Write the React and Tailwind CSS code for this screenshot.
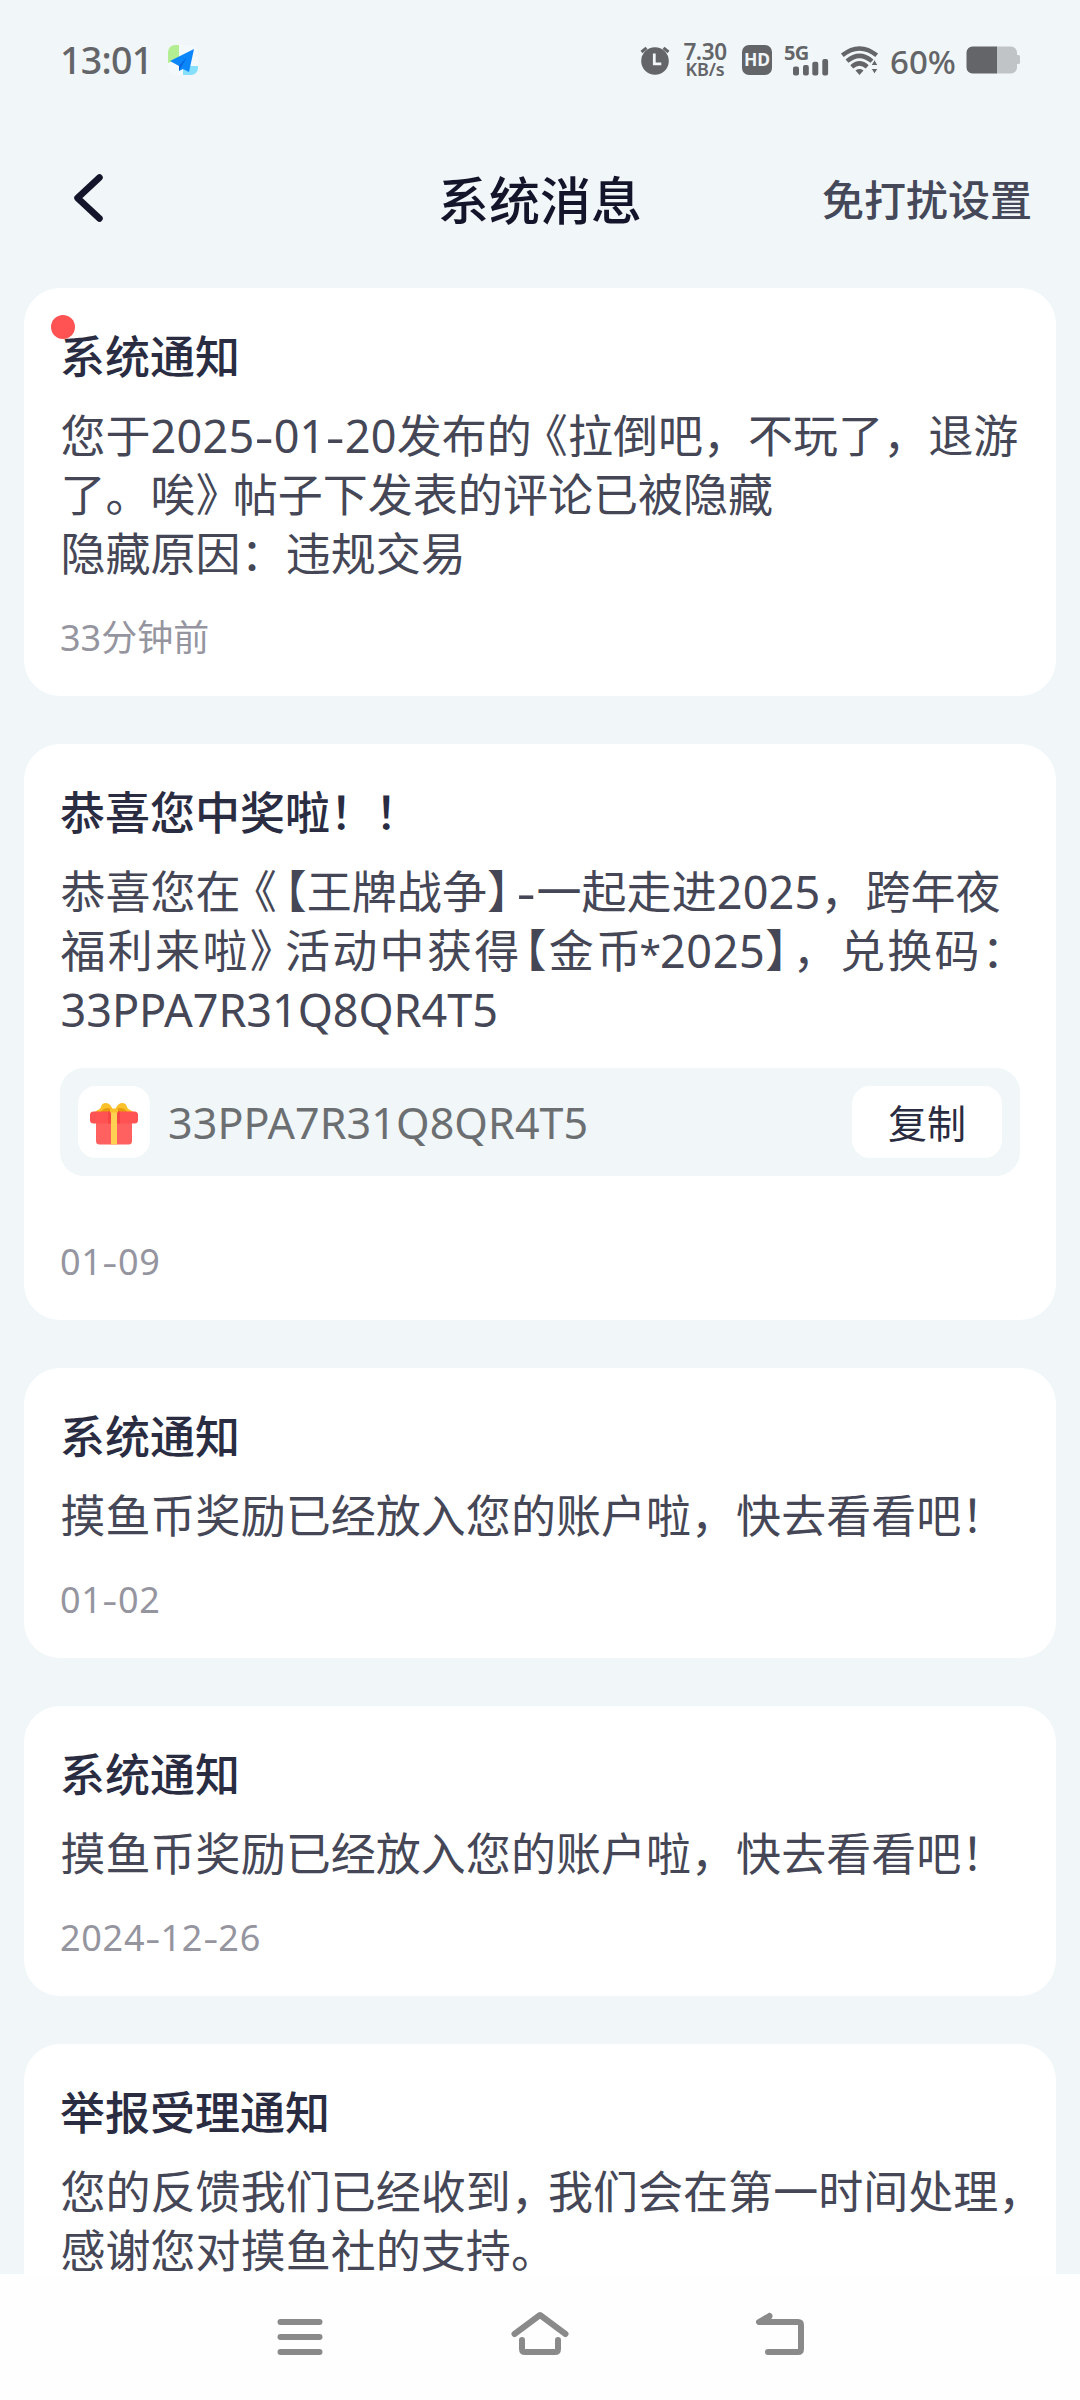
import React from "react";

const Hyphen = ({ className }) => <span className={`inline-block scale-x-130 ${className}`}>-</span>;

// Digit groups joined by widened hyphens.
const Num = ({ children }) => (
  <span className="tracking-[0.2px]">
    {children.split("-").map((part, i) => (
      <React.Fragment key={i}>
        {i > 0 && <Hyphen className="mx-[2.3px]" />}
        {part}
      </React.Fragment>
    ))}
  </span>
);

const Time = ({ children }) => (
  <span className="tracking-[0.7px]">
    {children.split("-").map((part, i) => (
      <React.Fragment key={i}>
        {i > 0 && <Hyphen className="mx-[1.5px]" />}
        {part}
      </React.Fragment>
    ))}
  </span>
);

const Line = ({ children, className = "" }) => (
  <div className={`h-[59px] whitespace-nowrap ${className}`}>{children}</div>
);

function StatusBar() {
  return (
    <header className="flex h-[120px] items-center pl-[60px] pr-[60px] text-[#636568]">
      <span className="w-[91px] text-[37.5px] leading-none font-medium tracking-[-0.7px] whitespace-nowrap">13:01</span>
      <svg className="ml-[16px] h-[32px] w-[32px]" viewBox="0 0 32 32">
        <rect x="1" y="1" width="30" height="30" rx="7" fill="#f4f9fc" />
        <path d="M1 19V8a7 7 0 0 1 7-7h4v14L1 19z" fill="#b4ee93" />
        <path d="M16 31V22h15v2a7 7 0 0 1-7 7z" fill="#86e0fc" />
        <path d="M3 17L27 5l-5 23-6-3-4 2v-5z" fill="#0c86fb" />
        <path d="M12 22L20 13l-6 10-2 4z" fill="#0062dc" />
      </svg>
      <div className="ml-auto flex items-center">
        <svg className="h-[32px] w-[32px]" viewBox="0 0 32 32">
          <circle cx="16" cy="17" r="13.8" fill="#636568" />
          <path d="M2.5 8l5-4.2M29.500 8l-5-4.2" stroke="#636568" strokeWidth="3" fill="none" />
          <path d="M15.300 9.500v10.300h7" stroke="#f1f6f9" strokeWidth="2.800" fill="none" />
        </svg>
        <div className="ml-[12px] flex w-[44px] flex-col items-center font-semibold">
          <span className="text-[22.5px] leading-[18px] tracking-[-0.4px]">7.30</span>
          <span className="text-[18px] leading-[17px] tracking-[-0.2px]">KB/s</span>
        </div>
        <div className="ml-[15px] flex h-[30px] w-[30px] items-center justify-center rounded-[7px] bg-[#636568] text-[17.5px] leading-none font-bold text-[#f1f6f9]">
          <span>HD</span>
        </div>
        <div className="ml-[12px] h-[32px] w-[46px]">
          <div className="h-[18px] text-[20px] leading-[18px] font-bold tracking-[-0.8px]">5G</div>
          <svg className="-mt-[4px] h-[18px] w-[46px]" viewBox="0 0 46 18">
            <g fill="#636568">
              <rect x="9" y="8.500" width="6" height="9" rx="2" />
              <rect x="19" y="7" width="5.800" height="10.500" rx="2" />
              <rect x="28.300" y="3.700" width="6" height="13.800" rx="2" />
              <rect x="38.300" y="1" width="5.800" height="16.500" rx="2" />
            </g>
          </svg>
        </div>
        <svg className="ml-[10px] h-[32px] w-[40px]" viewBox="0 0 40 32">
          <g fill="none" stroke="#636568" strokeWidth="4.400">
            <path d="M2.300 11.300Q19.500-2.500 36.700 11.300" />
            <path d="M7 17.200Q19.500 6.500 32 17.200" />
            <path d="M11.800 22.800Q19.500 16 27.200 22.800" />
          </g>
          <path d="M15.500 26.500q4-2.800 8 0L19.500 31z" fill="#636568" />
          <path d="M31 21.500l3.500-6 3.500 6zM31 24.500h7l-3.500 5.500z" fill="#636568" stroke="#f1f6f9" strokeWidth="1" />
        </svg>
        <span className="ml-[10px] w-[68px] pt-[2px] text-[33px] leading-none font-medium">60%</span>
        <svg className="ml-[8px] h-[28px] w-[54px]" viewBox="0 0 54 28">
          <path d="M30 0.500h15a6 6 0 0 1 6 6v2.500h1.500a1.500 1.500 0 0 1 1.500 1.500v6a1.500 1.500 0 0 1-1.500 1.500H51v3.500a6 6 0 0 1-6 6H30z" fill="#c1c4c7" />
          <path d="M6.500 0.500H31v27H6.500a6 6 0 0 1-6-6v-15a6 6 0 0 1 6-6z" fill="#636568" />
        </svg>
      </div>
    </header>
  );
}

function TitleBar() {
  return (
    <div className="grid h-[168px] grid-cols-[1fr_auto_1fr] items-start px-[48px] pt-[44px] pb-[52px]">
      <svg className="ml-[22px] mt-[8px] h-[54px] w-[40px]" viewBox="0 0 40 54" fill="none" stroke="#14152a" strokeWidth="6.500" strokeLinecap="round" strokeLinejoin="round">
        <path d="M29.500 5.500L7.500 26 29.500 46.500" />
      </svg>
      <h1 className="text-[51px] leading-[72px] font-medium text-[#14152a]">系统消息</h1>
      <span className="justify-self-end text-[42px] leading-[72px] font-medium text-[#444858]">免打扰设置</span>
    </div>
  );
}

function Gift() {
  return (
    <svg className="h-[48px] w-[48px]" viewBox="0 0 48 48">
      <path d="M4 15c2-3 6-3 7-6 1-6 9-5 11 1l2 5zM44 15c-2-3-6-3-7-6-1-6-9-5-11 1l-2 5z" fill="#fbc12b" />
      <path d="M10 15c3-5 8-6 12-4v4zM38 15c-3-5-8-6-12-4v4z" fill="#e79c0e" />
      <path d="M6 22h36v21a3.500 3.500 0 0 1-3.500 3.500h-29A3.500 3.500 0 0 1 6 43z" fill="#ff6161" />
      <rect x="0" y="13.500" width="48" height="12" rx="3.500" fill="#ff5353" />
      <path d="M18 13.500h12v12H18z" fill="#f54545" />
      <path d="M21 11h6v35.500h-6z" fill="#ffd152" />
      <path d="M20 10.500h8v4h-8z" fill="#fbc12b" />
    </svg>
  );
}

function Card({ title, time, unread, extra, children }) {
  return (
    <article className="relative rounded-[36px] bg-white px-[36px] pt-[37px] pb-[34px]">
      {unread && <i className="absolute top-[27px] left-[27px] h-[24px] w-[24px] rounded-full bg-[#ff5252]" />}
      <h2 className="h-[64px] text-[45px] leading-[64px] font-medium text-[#2a2c42]">{title}</h2>
      <div className="mt-[17px] pl-[0.5px] text-[45px] leading-[59px] tracking-[0.04px] text-[#454757]">{children}</div>
      {extra}
      {time && <div className={`${extra ? "mt-[62px]" : "mt-[31px]"} h-[48px] text-[36px] leading-[48px] text-[#95959f]`}>{time}</div>}
    </article>
  );
}

function CodeBar() {
  return (
    <div className="mt-[29px] flex h-[108px] items-center rounded-[24px] bg-[#f1f6f9] px-[18px]">
      <div className="flex h-[72px] w-[72px] items-center justify-center rounded-[18px] bg-white">
        <Gift />
      </div>
      <span className="ml-[18px] pt-[2px] text-[43px] leading-[60px] tracking-[0.1px] text-[#6c6f71]">33PPA7R31Q8QR4T5</span>
      <button className="ml-auto h-[72px] w-[150px] rounded-[18px] bg-white pt-[1px] text-[39px] leading-[71px] text-[#2a2c42]">复制</button>
    </div>
  );
}

function NavBar() {
  return (
    <nav className="flex h-[126px] shrink-0 justify-center gap-[180px] bg-[#fefefe] pt-[33px]">
      <svg className="h-[60px] w-[60px]" viewBox="0 0 60 60" fill="none" stroke="#8a8a8a" strokeWidth="6" strokeLinecap="round">
        <path d="M10.500 15h39M10.500 30h39M10.500 45h39" />
      </svg>
      <svg className="h-[60px] w-[60px]" viewBox="0 0 60 60" fill="none" stroke="#8a8a8a" strokeWidth="6" strokeLinecap="round" strokeLinejoin="round">
        <path d="M4.500 27L30 8l25.500 19M12 33v9q0 3 3 3h30q3 0 3-3v-9" />
      </svg>
      <svg className="h-[60px] w-[60px]" viewBox="0 0 60 60" fill="none" stroke="#8a8a8a" strokeWidth="6" strokeLinecap="round" strokeLinejoin="round">
        <path d="M19.500 9L9 15h39q3 0 3 3v24q0 3-3 3H18M17 13.500l2.500-4.500" />
      </svg>
    </nav>
  );
}

export default function App() {
  return (
    <div className="flex h-[2400px] w-[1080px] flex-col overflow-hidden bg-[#f1f6f9] font-['Noto_Sans','Noto_Sans_CJK_SC',sans-serif] [text-spacing-trim:space-all]">
      <StatusBar />
      <TitleBar />
      <main className="flex min-h-0 flex-1 flex-col gap-[48px] overflow-hidden px-[24px] *:shrink-0">
        <Card title="系统通知" time="33分钟前" unread>
          <Line>
            您于<Num>2025-01-20</Num>发布的<span className="-ml-[9px]">《</span>拉倒吧，不玩了，退游
          </Line>
          <Line>
            了。唉<span className="-mr-[8px]">》</span>帖子下发表的评论已被隐藏
          </Line>
          <Line>隐藏原因：违规交易</Line>
        </Card>
        <Card title="恭喜您中奖啦！！" time={<Time>01-09</Time>} extra={<CodeBar />}>
          <Line>
            恭喜您在<span className="-ml-[9px]">《</span>
            <span className="-ml-[15px]">【</span>王牌战争<span className="-mr-[16px]">】</span>
            <Hyphen className="mx-[3px]" />一起走进<Num>2025</Num>，跨年夜
          </Line>
          <Line className="tracking-[2.3px]">
            福利来啦<span className="-mr-[12px]">》</span>活动中获得<span className="-ml-[20px]">【</span>金币
            <span className="-mr-[1px] -ml-[4px] text-[39px] leading-none tracking-normal">*</span>
            <span className="tracking-[0.6px]">2025</span>
            <span className="-mr-[20px]">】</span>，兑换码：
          </Line>
          <Line className="tracking-[-0.05px]">33PPA7R31Q8QR4T5</Line>
        </Card>
        <Card title="系统通知" time={<Time>01-02</Time>}>
          <Line>摸鱼币奖励已经放入您的账户啦，快去看看吧！</Line>
        </Card>
        <Card title="系统通知" time={<Time>2024-12-26</Time>}>
          <Line>摸鱼币奖励已经放入您的账户啦，快去看看吧！</Line>
        </Card>
        <Card title="举报受理通知">
          <Line>
            您的反馈我们已经收到<span className="-mr-[8px]">，</span>我们会在第一时间处理，
          </Line>
          <Line>感谢您对摸鱼社的支持。</Line>
        </Card>
      </main>
      <NavBar />
    </div>
  );
}
